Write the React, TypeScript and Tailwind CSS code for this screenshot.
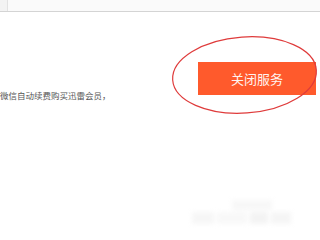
import React from 'react';

export default function App() {
  return (
    <div className="relative w-[320px] h-[240px] overflow-hidden bg-white" style={{ fontFamily: '"Noto Sans CJK SC", "Liberation Sans", sans-serif' }}>
      {/* top strip */}
      <div className="flex h-[12px] border-b border-[#d4d4d4] bg-[#fafafa]">
        <div className="w-[8px] border-r border-[#e2e2e2] bg-[#f3f3f3]" />
        <div className="flex-1" />
      </div>

      {/* content row */}
      <div className="flex items-start justify-between mt-[50px] pr-[4px]">
        <p className="mt-[29px] text-[8.5px] leading-none text-[#555555] whitespace-nowrap">
          微信自动续费购买迅雷会员，
        </p>
        <button className="w-[118px] h-[33px] bg-[#ff5a2c] text-[#fff4f0] text-[13px] flex items-center justify-center">
          关闭服务
        </button>
      </div>

      {/* red annotation ellipse */}
      <svg className="absolute left-0 top-0" width="320" height="240" viewBox="0 0 320 240">
        <ellipse cx="244.5" cy="75" rx="72" ry="38" fill="none" stroke="#df3b3b" strokeWidth="1.2" transform="rotate(-4 244.5 75)" />
      </svg>

      {/* blurred watermark */}
      <div className="absolute left-[192px] top-[200px] flex flex-col gap-[2px] blur-[2px] opacity-50">
        <div className="ml-[40px] w-[40px] h-[10px] bg-[#f0f0f0]" />
        <div className="flex gap-[3px]">
          <div className="w-[22px] h-[12px] bg-[#eeeeee]" />
          <div className="w-[30px] h-[12px] bg-[#f2f2f2]" />
          <div className="w-[18px] h-[12px] bg-[#e8e8e8]" />
          <div className="w-[20px] h-[12px] bg-[#ececec]" />
        </div>
      </div>
    </div>
  );
}
